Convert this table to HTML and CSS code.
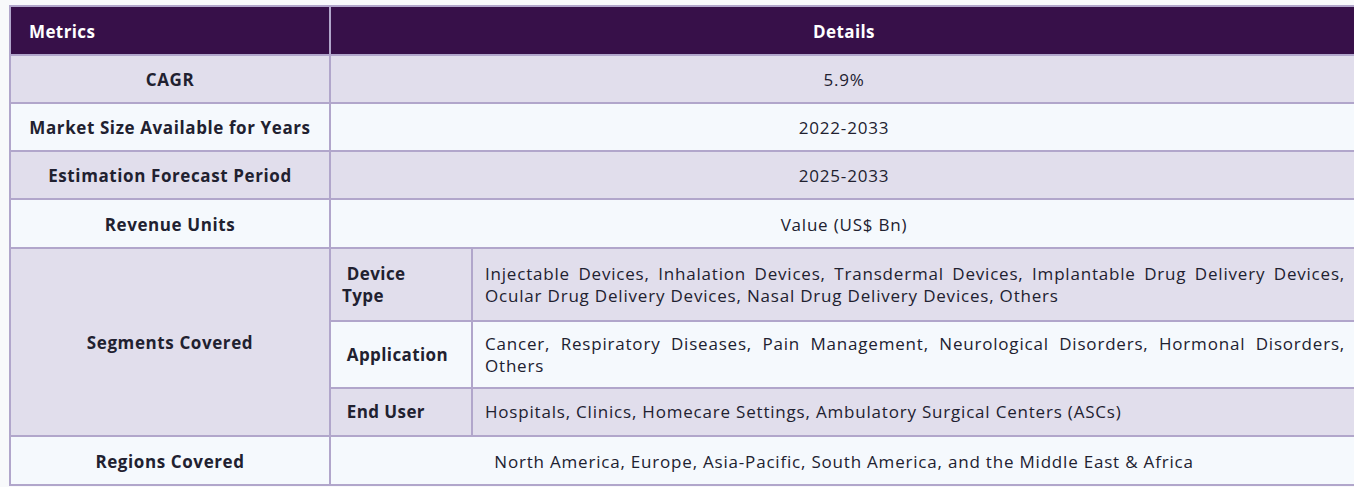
FILE: index.html
```html
<!DOCTYPE html>
<html lang="en">
<head>
<meta charset="utf-8">
<title>Report Metrics</title>
<link rel="stylesheet" href="styles.css">
</head>
<body>
<div class="wrap">
<table class="metrics">
  <colgroup>
    <col class="c-metric">
    <col class="c-sub">
    <col class="c-val">
  </colgroup>
  <thead>
    <tr class="head">
      <th class="h-left">Metrics</th>
      <th colspan="2">Details</th>
    </tr>
  </thead>
  <tbody>
    <tr class="alt">
      <td class="key">CAGR</td>
      <td colspan="2" class="val">5.9%</td>
    </tr>
    <tr class="light">
      <td class="key">Market Size Available for Years</td>
      <td colspan="2" class="val">2022-2033</td>
    </tr>
    <tr class="alt">
      <td class="key">Estimation Forecast Period</td>
      <td colspan="2" class="val">2025-2033</td>
    </tr>
    <tr class="light tall">
      <td class="key">Revenue Units</td>
      <td colspan="2" class="val">Value (US$ Bn)</td>
    </tr>
    <tr class="alt seg1">
      <td class="key" rowspan="3">Segments Covered</td>
      <td class="sub">&nbsp;Device Type</td>
      <td class="text">Injectable Devices, Inhalation Devices, Transdermal Devices, Implantable Drug Delivery Devices, Ocular Drug Delivery Devices, Nasal Drug Delivery Devices, Others</td>
    </tr>
    <tr class="light seg2">
      <td class="sub">&nbsp;Application</td>
      <td class="text">Cancer, Respiratory Diseases, Pain Management, Neurological Disorders, Hormonal Disorders, Others</td>
    </tr>
    <tr class="alt seg3">
      <td class="sub">&nbsp;End User</td>
      <td class="text">Hospitals, Clinics, Homecare Settings, Ambulatory Surgical Centers (ASCs)</td>
    </tr>
    <tr class="light tall">
      <td class="key">Regions Covered</td>
      <td colspan="2" class="val">North America, Europe, Asia-Pacific, South America, and the Middle East &amp; Africa</td>
    </tr>
  </tbody>
</table>
</div>
</body>
</html>
```
FILE: styles.css
```css
html, body {
  margin: 0;
  padding: 0;
  background: #f8f9fb;
  overflow: hidden;
}
body {
  font-family: "Open Sans", "Noto Sans", sans-serif;
  color: #212130;
  font-size: 17px;
  line-height: 22px;
  letter-spacing: 0.8px;
}
.wrap {
  padding: 5px 0 0 9px;
  width: 1360px;
}
.metrics {
  border-collapse: collapse;
  width: 1350px;
  table-layout: fixed;
}
.c-metric { width: 320px; }
.c-sub { width: 142px; }
.metrics th,
.metrics td {
  border: 2px solid #b1a6cb;
  vertical-align: middle;
}
.head th {
  background: #371049;
  color: #ffffff;
  font-weight: 700;
  letter-spacing: 0.4px;
  text-align: center;
  height: 45px;
  padding: 2px 18px 0;
}
.head th.h-left { text-align: left; }
.alt td { background: #e1deec; }
.light td { background: #f5f9fd; }
.key {
  font-weight: 700;
  letter-spacing: 0.6px;
  text-align: center;
  padding: 13px 12px 11px;
  height: 22px;
}
.val {
  text-align: center;
  padding: 13px 16px 11px;
}
.tall .key,
.tall .val {
  padding-top: 14px;
}
.sub {
  font-weight: 700;
  letter-spacing: 0.4px;
  text-align: left;
  padding: 0 20px 0 11px;
}
.text {
  text-align: justify;
  padding: 0 12px;
}
.seg1 td { height: 71px; }
.seg2 td { height: 65px; }
.seg3 td { height: 46px; }
```
